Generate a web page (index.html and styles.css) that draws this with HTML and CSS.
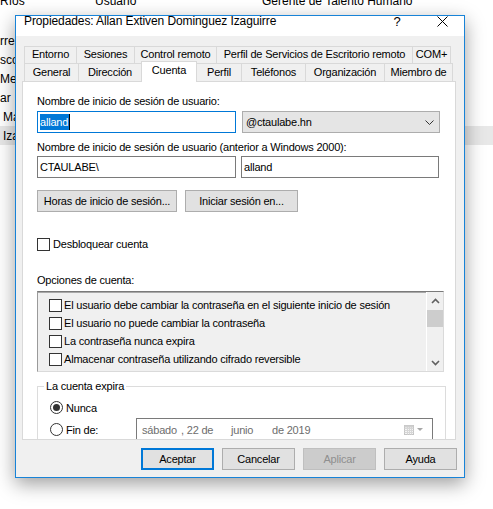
FILE: index.html
```html
<!DOCTYPE html>
<html lang="es">
<head>
<meta charset="utf-8">
<title>Propiedades</title>
<link rel="stylesheet" href="styles.css">
</head>
<body>
<div class="desk">
  <div class="bg-list">
    <div class="bg-head"><span>Ríos</span><span>Usuario</span><span>Gerente de Talento Humano</span></div>
    <div class="bg-row"></div>
    <div class="bg-row">rres</div>
    <div class="bg-row">scoto</div>
    <div class="bg-row">Mejía</div>
    <div class="bg-row">ar</div>
    <div class="bg-row bg-in">Martínez</div>
    <div class="bg-row bg-in bg-sel">Izaguirre</div>
  </div>

  <div class="win">
    <div class="titlebar">
      <span class="title">Propiedades: Allan Extiven Dominguez Izaguirre</span>
      <span class="help">?</span>
      <span class="close"><svg width="11" height="11" viewBox="0 0 11 11"><path d="M0.5 0.5L10.5 10.5M10.5 0.5L0.5 10.5" stroke="#000" stroke-width="1" fill="none"/></svg></span>
    </div>
    <div class="body">
      <div class="tabs">
        <div class="tabrow r1">
          <div class="tab first">Entorno</div>
          <div class="tab">Sesiones</div>
          <div class="tab">Control remoto</div>
          <div class="tab">Perfil de Servicios de Escritorio remoto</div>
          <div class="tab">COM+</div>
        </div>
        <div class="tabrow r2">
          <div class="tab first">General</div>
          <div class="tab">Dirección</div>
          <div class="tab sel">Cuenta</div>
          <div class="tab">Perfil</div>
          <div class="tab">Teléfonos</div>
          <div class="tab">Organización</div>
          <div class="tab">Miembro de</div>
        </div>
      </div>

      <div class="panel">
        <div class="lbl">Nombre de inicio de sesión de usuario:</div>
        <div class="fields f1">
          <div class="inp focus"><span class="seltext">alland</span><span class="caret"></span></div>
          <div class="combo"><span>@ctaulabe.hn</span><svg width="9" height="5" viewBox="0 0 9 5"><path d="M0.5 0.5L4.5 4.5L8.5 0.5" stroke="#333" stroke-width="1" fill="none"/></svg></div>
        </div>
        <div class="lbl l2">Nombre de inicio de sesión de usuario (anterior a Windows 2000):</div>
        <div class="fields f2">
          <div class="inp">CTAULABE\</div>
          <div class="inp">alland</div>
        </div>
        <div class="btn-row">
          <div class="btn w-horas">Horas de inicio de sesión...</div>
          <div class="btn w-iniciar">Iniciar sesión en...</div>
        </div>
        <div class="chk-row"><span class="box"></span><span>Desbloquear cuenta</span></div>
        <div class="lbl opts">Opciones de cuenta:</div>
        <div class="list">
          <div class="items">
            <div class="item"><span class="box"></span><span>El usuario debe cambiar la contraseña en el siguiente inicio de sesión</span></div>
            <div class="item"><span class="box"></span><span>El usuario no puede cambiar la contraseña</span></div>
            <div class="item"><span class="box"></span><span>La contraseña nunca expira</span></div>
            <div class="item"><span class="box"></span><span>Almacenar contraseña utilizando cifrado reversible</span></div>
          </div>
          <div class="sb">
            <div class="sb-btn"><svg width="9" height="6" viewBox="0 0 9 6"><path d="M1 5L4.5 1.5L8 5" stroke="#606060" stroke-width="1.6" fill="none"/></svg></div>
            <div class="sb-thumb"></div>
            <div class="sb-track"></div>
            <div class="sb-btn"><svg width="9" height="6" viewBox="0 0 9 6"><path d="M1 1L4.5 4.5L8 1" stroke="#606060" stroke-width="1.6" fill="none"/></svg></div>
          </div>
        </div>
        <fieldset class="expira">
          <legend>La cuenta expira</legend>
          <div class="radio-row"><span class="radio on"></span><span>Nunca</span></div>
          <div class="radio-row fin">
            <div class="fin-label"><span class="radio"></span><span>Fin de:</span></div>
            <div class="date">
              <span class="d1">sábado</span><span class="d2">, 22 de</span><span class="d3">junio</span><span class="d4">de 2019</span>
              <span class="cal">
                <svg width="10" height="10" viewBox="0 0 10 10"><rect x="0.5" y="0.5" width="9" height="9" fill="#f4f4f4" stroke="#c4c4c4"/><path d="M0.5 3.5H9.5M0.5 5.5H9.5M0.5 7.5H9.5M3.5 2V9.5M5.5 2V9.5M7.5 2V9.5" stroke="#d6d6d6" stroke-width="1"/><rect x="0.5" y="0.5" width="9" height="2" fill="#d0d0d0"/></svg>
                <svg class="tri" width="6" height="3" viewBox="0 0 6 3"><path d="M0 0H6L3 3Z" fill="#a8a8a8"/></svg>
              </span>
            </div>
          </div>
        </fieldset>
      </div>

      <div class="actions">
        <div class="btn dbtn default">Aceptar</div>
        <div class="btn dbtn">Cancelar</div>
        <div class="btn dbtn disabled">Aplicar</div>
        <div class="btn dbtn">Ayuda</div>
      </div>
    </div>
  </div>
</div>
</body>
</html>
```

FILE: styles.css
```css
* { box-sizing: border-box; }

html, body {
  margin: 0;
  background: #fff;
}

body {
  font-family: "Liberation Sans", Arial, sans-serif;
  font-size: 11px;
  letter-spacing: -0.2px;
  color: #000;
}

.desk {
  position: relative;
  width: 493px;
  height: 509px;
  overflow: hidden;
}

/* background list behind the dialog */
.bg-list {
  margin-top: -9px;
  font-size: 12px;
  letter-spacing: 0;
}
.bg-head {
  display: grid;
  grid-template-columns: 95px 167px 1fr;
  height: 21px;
  padding-top: 2px;
  line-height: 17px;
  white-space: nowrap;
}
.bg-row {
  height: 19px;
  padding-top: 2px;
  line-height: 17px;
  white-space: nowrap;
}
.bg-in { padding-left: 3px; }
.bg-sel { background: #e8e8e8; }

/* dialog window */
.win {
  position: absolute;
  left: 15px;
  top: 15px;
  width: 450px;
  height: 463px;
  border: 1px solid #1883d7;
  background: #f0f0f0;
  box-shadow: 0 6px 18px rgba(0, 0, 0, 0.38);
  display: flex;
  flex-direction: column;
}

.titlebar {
  flex: none;
  height: 20px;
  background: #fff;
  display: flex;
}
.title {
  flex: 1;
  padding-left: 8px;
  font-size: 12px;
  letter-spacing: -0.1px;
  line-height: 10px;
  white-space: nowrap;
}
.help {
  width: 46px;
  text-align: center;
  font-size: 13px;
  letter-spacing: 0;
  line-height: 11px;
}
.close {
  width: 44px;
  display: flex;
  justify-content: center;
  align-items: flex-start;
}

.body {
  flex: 1;
  min-height: 0;
  padding: 10px 8px 0 6px;
  display: flex;
  flex-direction: column;
}

/* tabs */
.tabs { margin-left: 2px; flex: none; }
.tabrow { display: grid; }
.r1 {
  grid-template-columns: 53px 58px 82px 196px 38px;
  height: 17px;
}
.r2 {
  grid-template-columns: 55px 63px 55px 45px 64px 79px 68px;
  height: 18px;
}
.tab {
  border-top: 1px solid #d9d9d9;
  border-right: 1px solid #d9d9d9;
  background: #f0f0f0;
  text-align: center;
  white-space: nowrap;
}
.tab.first { border-left: 1px solid #d9d9d9; }
.r1 .tab { line-height: 14px; }
.r2 .tab { line-height: 16px; }
.tab.sel {
  position: relative;
  z-index: 1;
  background: #fff;
  border-left: 1px solid #d9d9d9;
  margin: -2px 0 -1px -1px;
  width: calc(100% + 1px);
}

/* panel */
.panel {
  flex: none;
  height: 359px;
  background: #fff;
  border: 1px solid #d9d9d9;
  overflow: hidden;
  padding: 12px 10px 0 14px;
  display: flex;
  flex-direction: column;
}

.lbl {
  line-height: 15px;
  white-space: nowrap;
}
.l2 { margin-top: 7px; }
.opts { margin-top: 21px; }

.fields {
  display: grid;
  grid-template-columns: 199px 198px;
  height: 22px;
}
.f1 { margin-top: 2px; column-gap: 6px; }
.f2 { margin-top: 1px; column-gap: 5px; }

.inp {
  border: 1px solid #7a7a7a;
  background: #fff;
  padding-left: 2px;
  line-height: 20px;
  white-space: nowrap;
  overflow: hidden;
}
.inp.focus { border-color: #0078d7; }
.seltext {
  display: inline-block;
  background: #0078d7;
  color: #fff;
  line-height: 16px;
  padding: 0 1px 0 0;
}
.caret {
  display: inline-block;
  width: 1px;
  height: 16px;
  background: #000;
  vertical-align: -4px;
}

.combo {
  border: 1px solid #adadad;
  background: #e5e5e5;
  display: flex;
  align-items: center;
  justify-content: space-between;
  padding: 0 5px 0 3px;
  line-height: 20px;
}

.btn {
  height: 22px;
  border: 1px solid #adadad;
  background: #e1e1e1;
  line-height: 20px;
  text-align: center;
  white-space: nowrap;
}
.btn-row {
  display: flex;
  gap: 8px;
  margin-top: 12px;
}
.w-horas { width: 140px; }
.w-iniciar { width: 113px; }

.box {
  flex: none;
  width: 13px;
  height: 13px;
  border: 1px solid #333;
  background: #fff;
}
.chk-row {
  display: flex;
  align-items: center;
  height: 15px;
  margin-top: 25px;
  line-height: 15px;
}
.chk-row .box { margin-right: 3px; }

/* options list */
.list {
  flex: none;
  margin-top: 3px;
  width: 407px;
  height: 81px;
  border: 1px solid;
  border-color: #7a7a7a #dadada #dadada #9a9a9a;
  box-shadow: inset 0 1px 0 #a8a8a8;
  background: #f0f0f0;
  display: flex;
}
.items {
  flex: 1;
  padding: 4px 0 0 11px;
}
.item {
  display: flex;
  align-items: center;
  height: 18px;
  white-space: nowrap;
}
.item .box { margin-right: 2px; }

.sb {
  width: 17px;
  border-left: 1px solid #fff;
  background: #f0f0f0;
  display: flex;
  flex-direction: column;
}
.sb-btn {
  height: 17px;
  display: flex;
  align-items: center;
  justify-content: center;
}
.sb-thumb {
  height: 17px;
  margin-top: 1px;
  background: #cdcdcd;
}
.sb-track { flex: 1; }

/* group box */
.expira {
  flex: none;
  margin: 7px 0 0;
  width: 409px;
  min-width: 0;
  border: 1px solid #dcdcdc;
  padding: 6px 0 0 6px;
}
.expira legend {
  padding: 0 2px;
  line-height: 15px;
}
.radio-row {
  display: flex;
  align-items: center;
  height: 15px;
  padding-left: 6px;
  white-space: nowrap;
}
.radio {
  flex: none;
  width: 13px;
  height: 13px;
  border: 1px solid #333;
  border-radius: 50%;
  background: #fff;
  margin-right: 3px;
  display: flex;
  align-items: center;
  justify-content: center;
}
.radio.on::after {
  content: "";
  width: 7px;
  height: 7px;
  border-radius: 50%;
  background: #333;
}
.radio-row.fin {
  height: 23px;
  margin-top: 3px;
}
.fin-label {
  width: 86px;
  display: flex;
  align-items: center;
}
.date {
  flex: none;
  width: 297px;
  height: 23px;
  border: 1px solid #7a7a7a;
  background: #fff;
  color: #6d6d6d;
  display: flex;
  align-items: center;
  padding: 0 9px 0 5px;
}
.d1 { width: 39px; }
.d2 { width: 50px; }
.d3 { width: 41px; }
.cal {
  margin-left: auto;
  display: flex;
  align-items: center;
  gap: 3px;
}

/* dialog buttons */
.actions {
  flex: none;
  display: flex;
  justify-content: flex-end;
  gap: 8px;
  margin: 8px -1px 0 0;
}
.dbtn { width: 73px; }
.btn.default {
  border: 2px solid #0078d7;
  line-height: 18px;
}
.btn.disabled {
  background: #cccccc;
  border-color: #bfbfbf;
  color: #8f8f8f;
}
```
